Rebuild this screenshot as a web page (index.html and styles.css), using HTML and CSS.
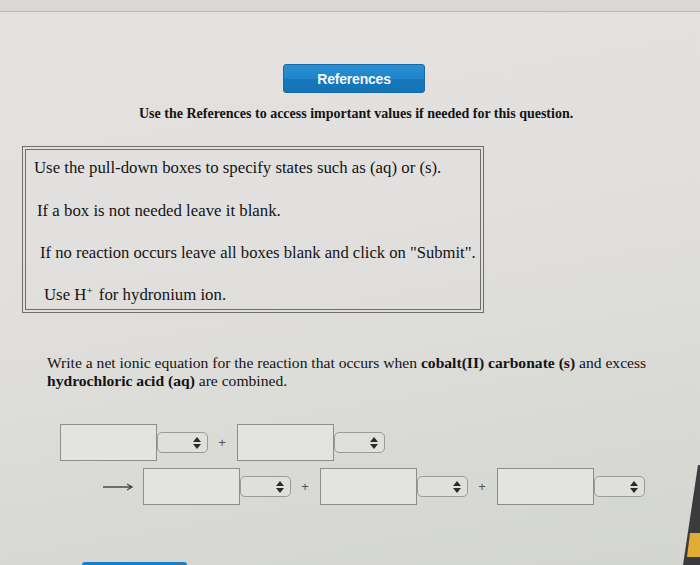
FILE: index.html
```html
<!DOCTYPE html>
<html>
<head>
<meta charset="utf-8">
<link rel="stylesheet" href="styles.css">
</head>
<body>
<div class="page">
  <div class="topbar"></div>
  <div class="refs-row"><button class="refs-btn">References</button></div>
  <p class="note">Use the References to access important values if needed for this question.</p>
  <div class="box">
    <p class="l1">Use the pull-down boxes to specify states such as (aq) or (s).</p>
    <p class="l2">If a box is not needed leave it blank.</p>
    <p class="l3">If no reaction occurs leave all boxes blank and click on "Submit".</p>
    <p class="l4">Use H<sup>+</sup> for hydronium ion.</p>
  </div>
  <p class="question">Write a net ionic equation for the reaction that occurs when <b>cobalt(II) carbonate (s)</b> and excess<br><b>hydrochloric acid (aq)</b> are combined.</p>
  <div class="eq row1">
    <div class="field"></div>
    <div class="sel"><svg width="8" height="12" viewBox="0 0 8 12"><path d="M4 0L8 5H0Z M0 7H8L4 12Z" fill="#2b2b2b"/></svg></div>
    <span class="plus">+</span>
    <div class="field"></div>
    <div class="sel"><svg width="8" height="12" viewBox="0 0 8 12"><path d="M4 0L8 5H0Z M0 7H8L4 12Z" fill="#2b2b2b"/></svg></div>
  </div>
  <div class="eq row2">
    <svg class="arrow" width="30" height="8" viewBox="0 0 30 8"><path d="M0 4H28 M24 1L29 4L24 7" stroke="#4a4a4a" stroke-width="1.3" fill="none"/></svg>
    <div class="field"></div>
    <div class="sel"><svg width="8" height="12" viewBox="0 0 8 12"><path d="M4 0L8 5H0Z M0 7H8L4 12Z" fill="#2b2b2b"/></svg></div>
    <span class="plus">+</span>
    <div class="field"></div>
    <div class="sel"><svg width="8" height="12" viewBox="0 0 8 12"><path d="M4 0L8 5H0Z M0 7H8L4 12Z" fill="#2b2b2b"/></svg></div>
    <span class="plus">+</span>
    <div class="field"></div>
    <div class="sel"><svg width="8" height="12" viewBox="0 0 8 12"><path d="M4 0L8 5H0Z M0 7H8L4 12Z" fill="#2b2b2b"/></svg></div>
  </div>
  <div class="bottom-btn"></div>
  <svg class="bezel" width="24" height="100" viewBox="0 0 24 100"><path d="M22 0H24V100H7Z" fill="#3b3b3d"/><path d="M14 68H24V92H11Z" fill="#e2ad34"/></svg>
</div>
</body>
</html>
```
FILE: styles.css
```css
html, body {
  margin: 0;
  padding: 0;
}
body {
  width: 700px;
  height: 565px;
  overflow: hidden;
  font-family: "Liberation Serif", "Times New Roman", serif;
  color: #141414;
}
.page {
  position: relative;
  width: 700px;
  height: 565px;
  overflow: hidden;
  background: linear-gradient(170deg, #e4e1df 0%, #e2e0de 40%, #d9dad6 75%, #d3d5d0 100%);
}
.topbar {
  height: 11px;
  background: #d9d8d7;
  border-bottom: 1px solid #b8b8b8;
}
.refs-row {
  padding-top: 52px;
  padding-left: 283px;
}
.refs-btn {
  display: block;
  width: 142px;
  height: 29px;
  margin: 0;
  padding: 0;
  border: 1px solid #176aa8;
  border-radius: 3px;
  background: linear-gradient(#2a8fd3 0%, #1f84c9 50%, #1677bb 52%, #1474b8 100%);
  color: #f4f8fb;
  font-family: "Liberation Sans", Arial, sans-serif;
  font-weight: bold;
  font-size: 14px;
  letter-spacing: -0.2px;
}
.note {
  margin: 13px 0 0 139px;
  font-size: 14px;
  line-height: 16px;
  font-weight: bold;
}
.box {
  margin: 24px 0 0 22px;
  width: 446px;
  height: 159px;
  border: 4px double #6e6e6e;
  padding-left: 8px;
}
.box p {
  margin: 0;
  font-size: 16.8px;
  line-height: 20px;
  white-space: nowrap;
}
.box .l1 { margin-top: 8px; }
.box .l2 { margin-top: 23px; padding-left: 3px; }
.box .l3 { margin-top: 22px; padding-left: 6px; font-size: 16.6px; }
.box .l4 { margin-top: 22px; padding-left: 10px; }
.box sup {
  font-size: 11px;
  line-height: 0;
  vertical-align: 6px;
  margin-right: 2px;
}
.question {
  margin: 41px 0 0 47px;
  font-size: 15.6px;
  line-height: 18px;
}
.eq {
  display: flex;
  align-items: center;
}
.row1 {
  margin: 34px 0 0 60px;
}
.row2 {
  margin: 7px 0 0 103px;
}
.field {
  width: 95px;
  height: 35px;
  border: 1px solid #8d8d8d;
  background: #e3e3e0;
}
.sel {
  width: 49px;
  height: 19px;
  border: 1px solid #9a9a98;
  border-radius: 5px;
  background: #dfe0dc;
  display: flex;
  align-items: center;
  justify-content: flex-end;
}
.sel svg {
  margin-right: 6px;
}
.plus {
  width: 8px;
  margin: 0 11px 0 10px;
  font-family: "Liberation Sans", Arial, sans-serif;
  font-size: 13px;
  color: #555;
  text-align: center;
}
.arrow {
  margin-right: 10px;
}
.bottom-btn {
  margin: 57px 0 0 82px;
  width: 105px;
  height: 12px;
  background: #1c7fc6;
  border-radius: 3px 3px 0 0;
}
.bezel {
  position: absolute;
  right: 0;
  bottom: 0;
}
```
